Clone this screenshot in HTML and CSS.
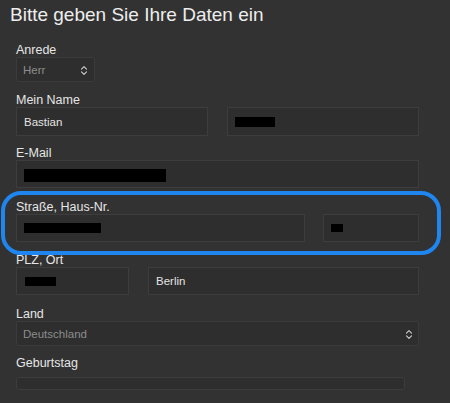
FILE: index.html
```html
<!DOCTYPE html>
<html lang="de">
<head>
<meta charset="utf-8">
<title>Daten</title>
<link rel="stylesheet" href="styles.css">
</head>
<body>
<h1 class="title">Bitte geben Sie Ihre Daten ein</h1>
<form class="form">
  <div class="field field--first">
    <div class="label">Anrede</div>
    <div class="select select--short">
      <span class="select__value">Herr</span>
      <svg class="chev" viewBox="0 0 8 11" width="8" height="11"><path d="M1.5 4.2 L4 1.7 L6.5 4.2 M1.5 6.8 L4 9.3 L6.5 6.8" fill="none" stroke="#cfcfcf" stroke-width="1.1" stroke-linecap="round" stroke-linejoin="round"/></svg>
    </div>
  </div>
  <div class="field field--name">
    <div class="label">Mein Name</div>
    <div class="row row--name">
      <div class="input input--tall">Bastian</div>
      <div class="input input--tall"><span class="redact redact--lastname"></span></div>
    </div>
  </div>
  <div class="field">
    <div class="label">E-Mail</div>
    <div class="input"><span class="redact redact--email"></span></div>
  </div>
  <div class="field field--highlight">
    <div class="label">Straße, Haus-Nr.</div>
    <div class="row row--street">
      <div class="input"><span class="redact redact--street"></span></div>
      <div class="input"><span class="redact redact--nr"></span></div>
    </div>
  </div>
  <div class="field field--city">
    <div class="label">PLZ, Ort</div>
    <div class="row row--city">
      <div class="input"><span class="redact redact--plz"></span></div>
      <div class="input">Berlin</div>
    </div>
  </div>
  <div class="field field--country">
    <div class="label">Land</div>
    <div class="select">
      <span class="select__value">Deutschland</span>
      <svg class="chev" viewBox="0 0 8 11" width="8" height="11"><path d="M1.5 4.2 L4 1.7 L6.5 4.2 M1.5 6.8 L4 9.3 L6.5 6.8" fill="none" stroke="#cfcfcf" stroke-width="1.1" stroke-linecap="round" stroke-linejoin="round"/></svg>
    </div>
  </div>
  <div class="field field--date">
    <div class="label">Geburtstag</div>
    <div class="date"></div>
  </div>
</form>
</body>
</html>
```
FILE: styles.css
```css
* { box-sizing: border-box; }
html, body {
  margin: 0;
  padding: 0;
  background: #323232;
}
body {
  padding-top: 3px;
  font-family: "Liberation Sans", Arial, sans-serif;
  color: #e9e9e9;
  height: 403px;
  overflow: hidden;
}
.title {
  margin: 0 0 0 10px;
  font-size: 19px;
  line-height: 24px;
  font-weight: normal;
  color: #ededed;
}
.form {
  padding-left: 16px;
  width: 419px;
}
.field {
  margin-top: 10px;
}
.field--first { margin-top: 16px; }
.field--name { margin-top: 11px; }
.field--city { margin-top: 11px; }
.field--country { margin-top: 12px; }
.label {
  font-size: 12.5px;
  line-height: 14px;
  color: #e6e6e6;
}
.row {
  display: grid;
  column-gap: 19px;
}
.row--name { grid-template-columns: 1fr 1fr; }
.row--street { grid-template-columns: 1fr 96px; column-gap: 18px; }
.row--city { grid-template-columns: 113px 1fr; }
.input {
  height: 28px;
  background: #2e2e2e;
  border: 1px solid #3d3d3d;
  display: flex;
  align-items: center;
  padding-left: 7px;
  font-size: 11.5px;
  color: #e4e4e4;
}
.input--tall { height: 29px; }
.select {
  height: 25px;
  background: #2e2e2e;
  border: 1px solid #3b3b3b;
  border-radius: 2px;
  display: flex;
  align-items: center;
  justify-content: space-between;
  padding: 1px 5px 0 6px;
  font-size: 11.5px;
  color: #8c8c8c;
}
.select--short { width: 79px; padding-right: 6px; }
.chev { display: block; }
.redact {
  display: block;
  background: #000;
}
.redact--lastname { width: 40px; height: 10px; }
.redact--email { width: 142px; height: 13px; margin-top: 2px; }
.redact--street { width: 77px; height: 10px; }
.redact--nr { width: 12px; height: 8px; }
.redact--plz { width: 31px; height: 9px; margin-left: 1px; }
.field--highlight {
  position: relative;
  margin-top: 12px;
}
.field--highlight::after {
  content: "";
  position: absolute;
  left: -15px;
  top: -9px;
  right: -22px;
  bottom: -13px;
  border: 4px solid #1f86f0;
  border-radius: 20px;
  pointer-events: none;
}
.field--date .label { margin-bottom: 7px; }
.date {
  width: 389px;
  height: 13px;
  border: 1px solid #3d3d3d;
  border-radius: 3px;
  background: #2e2e2e;
}
```
